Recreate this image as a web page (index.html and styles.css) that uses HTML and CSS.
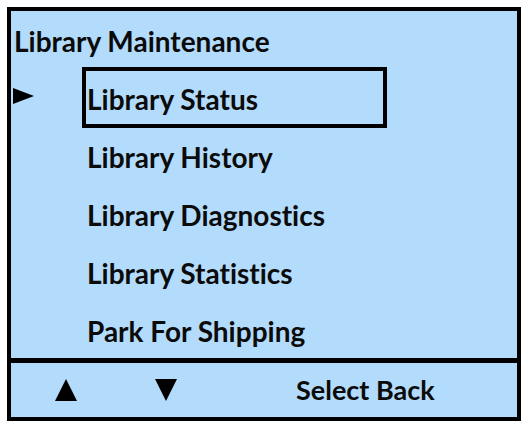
FILE: index.html
```html
<!DOCTYPE html>
<html>
<head>
<meta charset="utf-8">
<link rel="stylesheet" href="styles.css">
</head>
<body>
<div class="panel">
  <div class="menu">
    <div class="title">Library Maintenance</div>
    <ul class="items">
      <li class="item">
        <svg class="pointer" width="21" height="16" viewBox="0 0 21 16"><polygon points="0,0 21,8 0,16" fill="#000"/></svg>
        <span class="label selected">Library Status</span>
      </li>
      <li class="item"><span class="label">Library History</span></li>
      <li class="item"><span class="label">Library Diagnostics</span></li>
      <li class="item"><span class="label">Library Statistics</span></li>
      <li class="item"><span class="label">Park For Shipping</span></li>
    </ul>
  </div>
  <div class="footer">
    <svg class="key up" width="22" height="22" viewBox="0 0 22 22"><polygon points="11,0 22,22 0,22" fill="#000"/></svg>
    <svg class="key down" width="22" height="22" viewBox="0 0 22 22"><polygon points="0,0 22,0 11,22" fill="#000"/></svg>
    <span class="softkeys">Select Back</span>
  </div>
</div>
</body>
</html>
```
FILE: styles.css
```css
html, body {
  margin: 0;
  padding: 0;
  background: #ffffff;
}
body {
  padding: 7px 5px 2px 7px;
  font-family: Lato, "Open Sans", "Liberation Sans", sans-serif;
  font-weight: 700;
  color: #0b0b0b;
  font-variant-ligatures: none;
}
.panel {
  box-sizing: border-box;
  width: 514px;
  height: 414px;
  border: 4px solid #000;
  background: #b3dbfb;
  display: flex;
  flex-direction: column;
}
.menu {
  box-sizing: border-box;
  height: 352px;
  padding: 15px 0 0 2px;
  border-bottom: 5px solid #000;
}
.title {
  font-size: 28px;
  line-height: 30px;
  padding-left: 1px;
}
.items {
  list-style: none;
  margin: 19px 0 0 0;
  padding: 0;
  display: flex;
  flex-direction: column;
  gap: 10px;
}
.item {
  display: flex;
  align-items: center;
  position: relative;
}
.pointer {
  position: absolute;
  left: 0;
  top: 13px;
}
.label {
  box-sizing: border-box;
  margin-left: 69px;
  width: 305px;
  border: 4px solid transparent;
  font-size: 28px;
  line-height: 36px;
  padding: 2px 0 2px 1px;
}
.label.selected {
  border-color: #000;
  padding-top: 10px;
  padding-bottom: 7px;
  margin-top: -8px;
  margin-bottom: -5px;
}
.footer {
  flex: 1;
  display: flex;
  align-items: center;
  padding-left: 44px;
}
.key.down {
  margin-left: 78px;
}
.softkeys {
  margin-left: 119px;
  font-size: 27px;
  line-height: 30px;
}
```
